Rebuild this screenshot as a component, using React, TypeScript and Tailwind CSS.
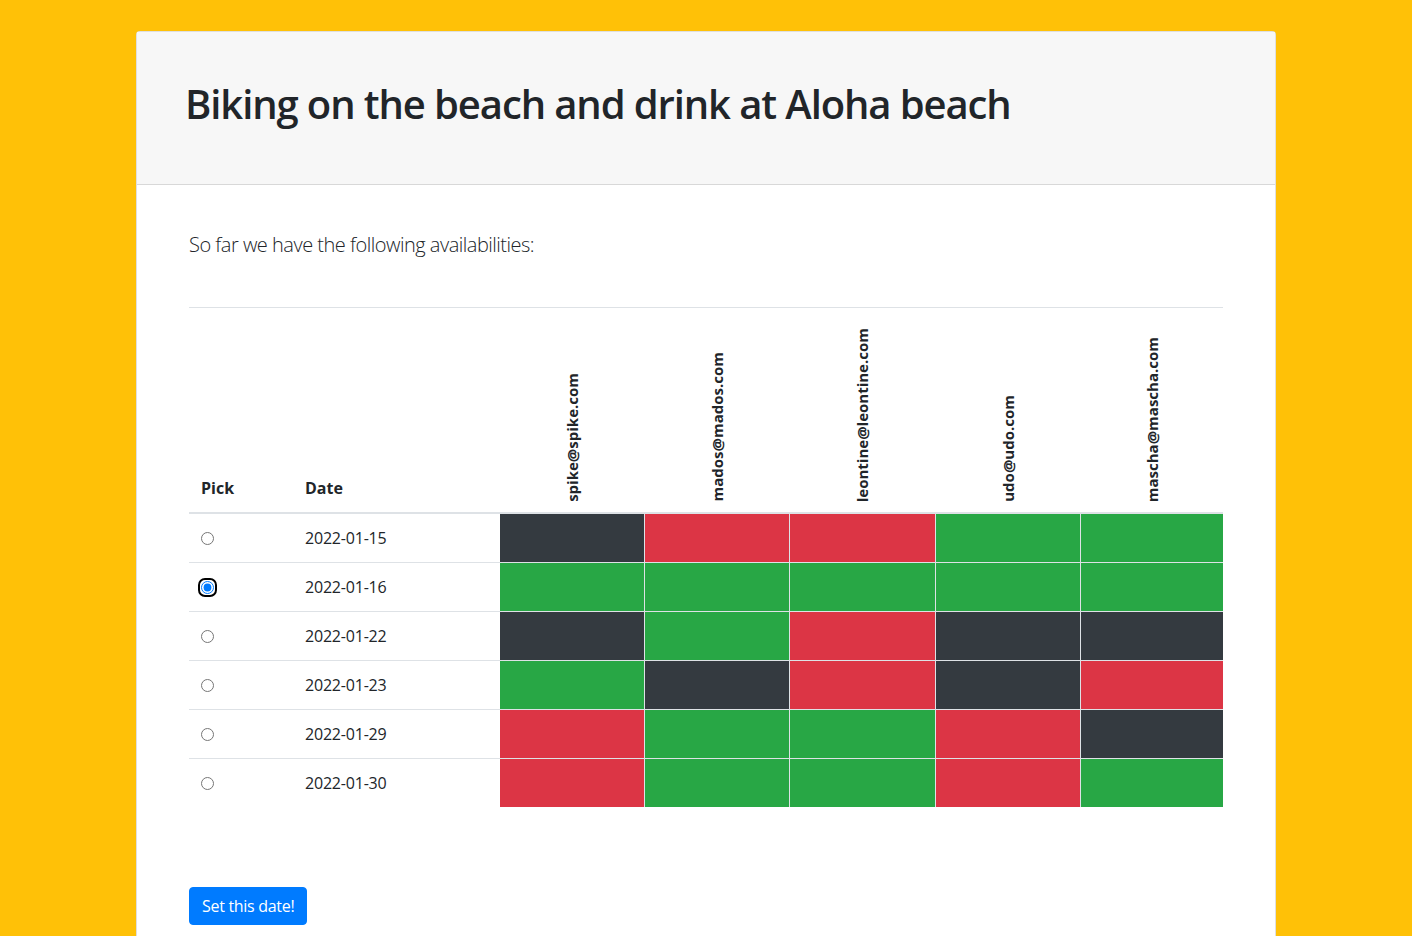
const people = [
  'spike@spike.com',
  'mados@mados.com',
  'leontine@leontine.com',
  'udo@udo.com',
  'mascha@mascha.com',
];

type State = 'yes' | 'no' | 'unknown';

const rows: { date: string; picked?: boolean; states: State[] }[] = [
  { date: '2022-01-15', states: ['unknown', 'no', 'no', 'yes', 'yes'] },
  { date: '2022-01-16', picked: true, states: ['yes', 'yes', 'yes', 'yes', 'yes'] },
  { date: '2022-01-22', states: ['unknown', 'yes', 'no', 'unknown', 'unknown'] },
  { date: '2022-01-23', states: ['yes', 'unknown', 'no', 'unknown', 'no'] },
  { date: '2022-01-29', states: ['no', 'yes', 'yes', 'no', 'unknown'] },
  { date: '2022-01-30', states: ['no', 'yes', 'yes', 'no', 'yes'] },
];

const stateClass: Record<State, string> = {
  yes: 'bg-[#28a745]',
  no: 'bg-[#dc3545]',
  unknown: 'bg-[#343a40]',
};

// pick | date | one column per person
const cols = 'grid grid-cols-[104px_207px_144px_145px_146px_145px_1fr]';

const App = () => {
  return (
    <div className="min-h-screen bg-[#ffc107] pt-[31px] font-['Open_Sans',sans-serif] text-[#212529]">
      <div className="mx-auto w-[1140px] rounded border border-black/[0.125] bg-white">
        {/* Header */}
        <div className="border-b border-black/[0.125] bg-[#f7f7f7] px-12 pt-12 pb-14">
          <h1 className="text-[40px] leading-[48px] font-semibold tracking-[-1.1px]">
            Biking on the beach and drink at Aloha beach
          </h1>
        </div>

        {/* Body */}
        <div className="px-[52px] pt-[45px] pb-12">
          <p className="text-xl leading-[30px] font-light tracking-[-0.5px]">
            So far we have the following availabilities:
          </p>

          <div className="mt-[47px] text-base">
            {/* Table head */}
            <div className={`${cols} border-t border-b-2 border-t-[#dee2e6] border-b-[#dee2e6]`}>
              <div className="flex h-[204px] items-end px-3 pb-3 font-bold leading-6">Pick</div>
              <div className="flex h-[204px] items-end px-3 pb-3 font-bold leading-6">Date</div>
              {people.map((p) => (
                <div key={p} className="flex h-[204px] items-end justify-center pb-[10px]">
                  <span className="rotate-180 text-[15px] leading-5 font-bold [writing-mode:vertical-rl]">{p}</span>
                </div>
              ))}
            </div>

            {/* Rows */}
            {rows.map((row, i) => (
              <div key={row.date} className={`${cols} ${i > 0 ? 'h-[49px] border-t border-[#dee2e6]' : 'h-[48px]'}`}>
                <div className="flex items-center px-3">
                  <span
                    className={`inline-flex rounded-[4px] ${
                      row.picked ? 'outline-2 outline-offset-[1px] outline-black' : ''
                    }`}
                  >
                    <input
                      type="radio"
                      name="pick"
                      defaultChecked={row.picked}
                      className="h-[13px] w-[13px] accent-[#007bff]"
                    />
                  </span>
                </div>
                <div className="flex items-center px-3 leading-6 tracking-[-0.2px]">{row.date}</div>
                {row.states.map((s, j) => (
                  <div key={j} className={`${stateClass[s]} ${j > 0 ? 'border-l border-[#dee2e6]' : ''}`} />
                ))}
              </div>
            ))}
          </div>

          <button className="mt-20 rounded border border-[#007bff] bg-[#007bff] px-3 py-1.5 text-base leading-6 tracking-[-0.3px] text-white">
            Set this date!
          </button>
        </div>
      </div>
    </div>
  );
};

export default App;
